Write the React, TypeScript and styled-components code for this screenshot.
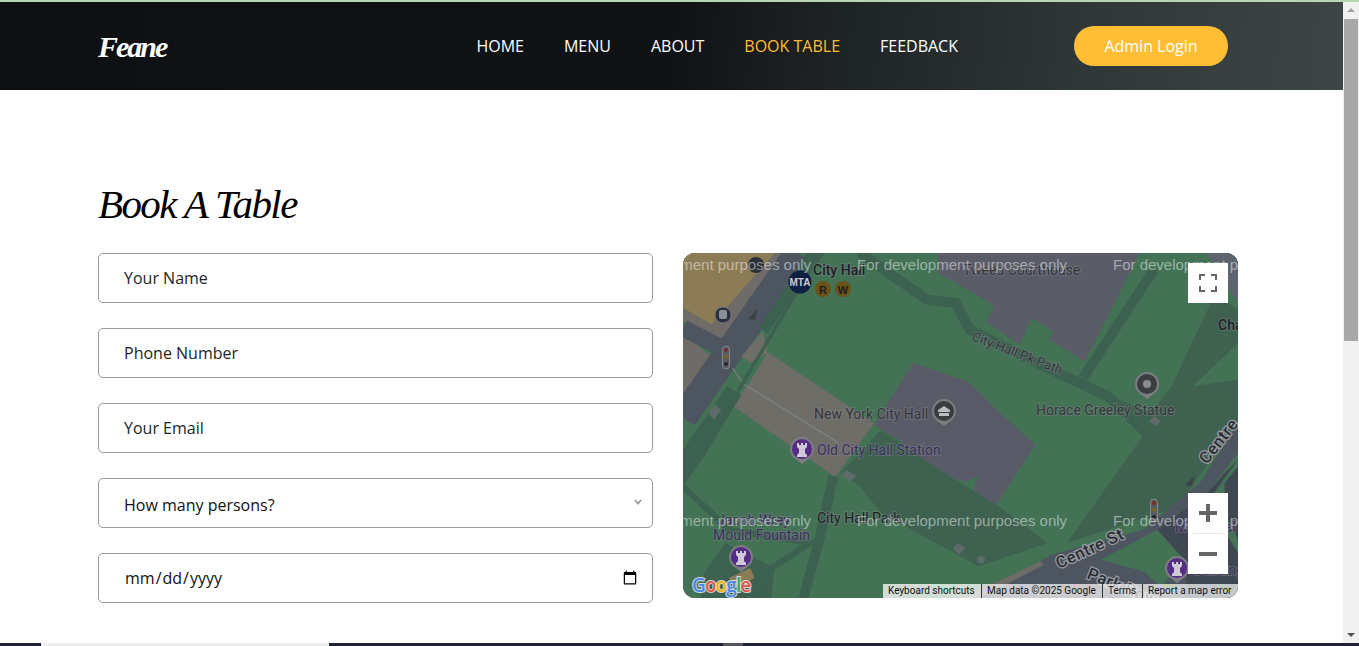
import React from 'react'
import styled, { createGlobalStyle } from 'styled-components'

const GlobalStyle = createGlobalStyle`
  html, body {
    margin: 0;
    height: 100%;
    overflow: hidden;
    background: #fff;
    font-family: "Open Sans", "Liberation Sans", sans-serif;
  }
  * { box-sizing: border-box; }
`

const Screen = styled.div`
  height: 646px;
  display: flex;
  flex-direction: column;
`

const TopStrip = styled.div`
  height: 2px;
  flex: none;
  background: #b9d6b4;
`

const Window = styled.div`
  flex: 1;
  min-height: 0;
  display: flex;
`

const Page = styled.div`
  flex: 1;
  min-width: 0;
  overflow: hidden;
`

const Header = styled.header`
  height: 88px;
  padding: 0 115px 0 98px;
  display: flex;
  align-items: center;
  background: linear-gradient(97deg, #0e1012 0%, #101315 50%, #1e2324 62%, #2f3637 80%, #3d4647 100%);
`

const Logo = styled.a`
  font-family: "Liberation Serif", serif;
  font-style: italic;
  font-weight: 700;
  font-size: 30px;
  letter-spacing: -2px;
  line-height: 40px;
  margin-top: 2px;
  color: #fff;
`

const Nav = styled.nav`
  margin-left: auto;
  margin-right: 116px;
  display: flex;
  gap: 40px;
`

const NavLink = styled.a<{ $active?: boolean }>`
  font-size: 16px;
  line-height: 24px;
  white-space: nowrap;
  color: ${({ $active }) => ($active ? '#ffbe33' : '#fff')};
`

const LoginButton = styled.button`
  width: 154px;
  height: 40px;
  padding: 0;
  border: none;
  border-radius: 20px;
  background: #ffbe33;
  color: #fff;
  font: 16px "Open Sans", sans-serif;
`

const Section = styled.section`
  padding: 90px 105px 0 98px;
`

const Title = styled.h2`
  margin: 0 0 25px;
  font-family: "Liberation Serif", serif;
  font-style: italic;
  font-weight: 400;
  font-size: 41px;
  letter-spacing: -1.6px;
  line-height: 48px;
  color: #000;
`

const Columns = styled.div`
  display: grid;
  grid-template-columns: 555px 555px;
  gap: 30px;
`

const Form = styled.form`
  display: flex;
  flex-direction: column;
  gap: 25px;
`

const Input = styled.input`
  width: 100%;
  height: 50px;
  padding: 0 25px 0 25px;
  border: 1px solid #999;
  border-radius: 5px;
  background: #fff;
  color: #111;
  font: 16px "Open Sans", sans-serif;
  outline: none;

  &::placeholder {
    color: #212529;
    opacity: 1;
  }
`

const DateInput = styled(Input)`
  padding-right: 12px;
`

const SelectWrap = styled.div`
  position: relative;
`

const Select = styled.select`
  width: 100%;
  height: 50px;
  padding: 4px 25px 0;
  border: 1px solid #999;
  border-radius: 5px;
  background: #fff;
  color: #111;
  font: 16px "Open Sans", sans-serif;
  appearance: none;
  outline: none;
`

const Chevron = styled.svg`
  position: absolute;
  top: 21px;
  right: 11px;
  width: 8px;
  height: 6px;
  pointer-events: none;
`

const MapFrame = styled.div`
  position: relative;
  height: 345px;
  border-radius: 12px;
  overflow: hidden;
  background: #437254;
`

const MapCanvas = styled.svg`
  display: block;
  width: 555px;
  height: 345px;
`

const MapLabel = styled.text<{ $tone?: 'dark' | 'grey' | 'purple'; $size?: number; $bold?: boolean }>`
  font-family: Roboto, "Liberation Sans", sans-serif;
  font-size: ${({ $size }) => $size ?? 14}px;
  font-weight: ${({ $bold }) => ($bold ? 500 : 400)};
  fill: ${({ $tone }) => ($tone === 'purple' ? '#3c2f5f' : $tone === 'grey' ? '#34363c' : '#1e2026')};
  stroke: rgba(130, 135, 140, 0.45);
  stroke-width: 2px;
  paint-order: stroke;
`

const RoadLabel = styled.text`
  font-family: Roboto, "Liberation Sans", sans-serif;
  font-size: 16.5px;
  font-weight: 500;
  letter-spacing: 0.5px;
  fill: #2a2c33;
  stroke: #9a9da2;
  stroke-width: 2.5px;
  paint-order: stroke;
`

const Watermark = styled.text`
  font-family: "Liberation Sans", sans-serif;
  font-size: 15px;
  fill: rgba(255, 255, 255, 0.48);
`

const GoogleMark = styled.text`
  font-family: "Open Sans", sans-serif;
  font-size: 19px;
  font-weight: 600;
  letter-spacing: -0.9px;
  stroke: #fff;
  stroke-width: 2px;
  stroke-opacity: 0.75;
  paint-order: stroke;
`

const MapControl = styled.div<{ $top: number }>`
  position: absolute;
  top: ${({ $top }) => $top}px;
  right: 10px;
  width: 40px;
  background: #fff;
`

const ControlCell = styled.div`
  height: 40px;
  display: flex;
  align-items: center;
  justify-content: center;
`

const ControlDivider = styled.div`
  height: 1px;
  margin: 0 5px;
  background: #e6e6e6;
`

const Attribution = styled.div`
  position: absolute;
  right: 0;
  bottom: 0;
  height: 14px;
  display: flex;
  background: rgba(255, 255, 255, 0.7);
  color: #111;
  font: 10px/14px Roboto, "Liberation Sans", sans-serif;
`

const AttributionItem = styled.span<{ $width: number }>`
  width: ${({ $width }) => $width}px;
  padding-left: 5px;
  white-space: nowrap;
  border-left: 1px solid #333;

  &:first-child {
    border-left: none;
    background: rgba(255, 255, 255, 0.2);
  }
`

const Scrollbar = styled.div`
  width: 16px;
  flex: none;
  position: relative;
  background: #f1f1f1;
`

const ScrollThumb = styled.div`
  position: absolute;
  top: 17px;
  left: 1px;
  width: 14px;
  height: 322px;
  background: #a8a8a8;
`

const ScrollArrow = styled.div<{ $down?: boolean }>`
  position: absolute;
  left: 4px;
  ${({ $down }) => ($down ? 'bottom: 6px;' : 'top: 6px;')}
  border-left: 4px solid transparent;
  border-right: 4px solid transparent;
  ${({ $down }) => ($down ? 'border-top: 4px solid #505050;' : 'border-bottom: 4px solid #a3a3a3;')}
`

const BottomStrip = styled.div`
  height: 3px;
  flex: none;
  display: flex;
  background: #1e2336;
`

const StripPiece = styled.div<{ $width: number; $color?: string }>`
  width: ${({ $width }) => $width}px;
  background: ${({ $color }) => $color ?? 'transparent'};
`

const Pin = ({ x, y, fill, children }: { x: number; y: number; fill: string; children?: React.ReactNode }) => (
  <g transform={`translate(${x} ${y})`}>
    <path d="M0 15 L-9 8 A12 12 0 1 1 9 8 Z" fill="#7b7d80" />
    <circle r="10" fill={fill} />
    {children}
  </g>
)

const Rook = () => (
  <path
    d="M-5 -6 h2 v2 h2 v-2 h2 v2 h2 v-2 h2 v4 l-2 2 v4 l2 2 v2 h-10 v-2 l2 -2 v-4 l-2 -2 Z"
    fill="#cfc8d8"
  />
)

const TrafficLight = ({ x, y }: { x: number; y: number }) => (
  <g transform={`translate(${x} ${y})`}>
    <rect x="-3.5" y="-11" width="7" height="23" rx="3.5" fill="#5a5c60" stroke="#85888c" />
    <circle cy="-7" r="2" fill="#7a2a28" />
    <circle cy="0" r="2" fill="#7a6420" />
    <circle cy="7" r="2" fill="#23262a" />
  </g>
)

// shapes are traced from the 2.825x / 3x crop, hence the scale on the group
const MapDrawing = () => (
  <MapCanvas viewBox="0 0 555 345">
    <g transform="scale(0.354 0.3333)">
      <rect width="1568" height="1035" fill="#437254" />
      <polygon points="0,0 260,0 80,215 0,165" fill="#8c7c55" />
      <polygon points="0,165 80,215 260,0 300,0 105,270 0,205" fill="#6f6b68" />
      <polygon points="0,270 18,275 0,335" fill="#8c7c55" />
      <polygon points="0,240 78,310 0,440" fill="#6f6b68" />
      <polyline points="325,0 0,495" fill="none" stroke="#4d5560" strokeWidth="80" />
      <polyline points="0,225 110,285" fill="none" stroke="#4d5560" strokeWidth="50" />
      <polygon points="350,0 400,0 240,240 215,225" fill="#3d6150" />
      <polygon points="225,235 165,310 190,330 240,300" fill="#6f6d68" />
      <polygon points="240,298 540,510 430,672 145,462 165,420 190,385" fill="#6f6d68" />
      <polyline points="140,345 170,392 440,570" fill="none" stroke="#83868a" strokeWidth="3" />
      <polyline points="320,120 155,415" fill="none" stroke="#3d6150" strokeWidth="10" />
      <polygon points="125,400 165,425 60,610 0,700 0,590" fill="#3d6150" />
      <polygon points="445,660 560,530 770,680 885,755 1030,870 835,940 560,780 500,700" fill="#3e6150" />
      <polyline points="425,670 385,860 340,1035" fill="none" stroke="#3d6150" strokeWidth="28" />
      <polyline points="0,700 130,830 360,870 250,945 240,1035" fill="none" stroke="#3d6150" strokeWidth="18" />
      <polygon points="60,960 120,870 250,940 230,1035 50,1035" fill="#3d6150" />
      <polyline points="500,0 690,140 770,150 810,230 1060,360 1200,430 1310,540" fill="none" stroke="#3d6150" strokeWidth="30" />
      <polyline points="1330,50 1130,375" fill="none" stroke="#3d6150" strokeWidth="28" />
      <polygon points="1225,435 1360,430 1380,400 1500,130 1568,150 1568,500 1400,760 1085,870 1305,540" fill="#3e6150" />
      <polygon points="1440,400 1568,270 1568,380" fill="#437254" />
      <polygon points="1225,435 1360,430 1320,480" fill="#437254" />
      <polygon points="720,0 1290,0 1135,325 1035,260 1045,235 985,195 950,275 855,205 880,160 830,125 720,60" fill="#5a5c68" />
      <polygon points="1290,0 1568,0 1568,170 1450,90" fill="#437254" />
      <polygon points="1480,0 1568,0 1568,150" fill="#5c6470" />
      <polygon points="650,330 800,385 830,410 880,465 995,575 885,755 820,710 835,670 800,685 770,680 640,590 610,560 540,515" fill="#5a5b68" />
      <polygon points="90,455 108,470 88,500 72,480" fill="#5f6a6a" />
      <polygon points="460,650 490,668 472,685 445,668" fill="#5f6a6a" />
      <polygon points="775,870 797,885 780,905 762,888" fill="#5f6a6a" />
      <polygon points="1330,490 1350,505 1335,520 1318,505" fill="#5f6a6a" />
      <circle cx="842" cy="920" r="11" fill="#5f6a6a" />
      <polygon points="790,1035 1010,925 1040,905 1300,830 1460,690 1568,510 1568,600 1480,720 1340,830 1470,1035" fill="#4d5560" />
      <polygon points="790,1035 1010,925 1020,935 840,1035" fill="#6f6b68" />
      <polygon points="1180,920 1340,830 1420,925 1350,1000 1300,955" fill="#437254" />
      <polygon points="1340,830 1480,720 1530,660 1568,620 1568,1035 1420,1035 1425,930" fill="#3f4753" />
      <polygon points="1500,720 1568,620 1568,640 1530,690 1530,780 1568,860 1568,900 1510,800" fill="#437254" />
      <polygon points="130,975 190,945 202,975 150,1005" fill="#8c7c55" />
    </g>

    <circle cx="73" cy="12" r="8" fill="#2a3038" />
    <circle cx="117" cy="29" r="11.5" fill="#0e2044" />
    <text x="117" y="33" textAnchor="middle" fill="#c8ccd4" fontFamily="Liberation Sans" fontSize="10" fontWeight="700">MTA</text>
    <circle cx="140" cy="36" r="8" fill="#6b5218" />
    <text x="140" y="40.5" textAnchor="middle" fill="#1e1e1e" fontFamily="Liberation Sans" fontSize="11" fontWeight="700">R</text>
    <circle cx="160" cy="36" r="8" fill="#6b5218" />
    <text x="160" y="40.5" textAnchor="middle" fill="#1e1e1e" fontFamily="Liberation Sans" fontSize="11" fontWeight="700">W</text>
    <MapLabel x="130" y="22" $bold>City Hall</MapLabel>
    <MapLabel x="280" y="22" $tone="grey">Tweed Courthouse</MapLabel>
    <MapLabel x="535" y="77" $bold>Cha</MapLabel>

    <Watermark x="-82" y="17">For development purposes only</Watermark>
    <Watermark x="174" y="17">For development purposes only</Watermark>
    <Watermark x="430" y="17">For development purposes only</Watermark>

    <circle cx="40" cy="62" r="8" fill="#2a3240" stroke="#6b7076" />
    <rect x="36" y="57" width="8" height="9" rx="2" fill="#8a8f98" />
    <polygon points="75,55 65,66 72,67" fill="#3c4248" />
    <polygon points="512,222 502,232 509,233" fill="#3c4248" />
    <TrafficLight x={43} y={104} />
    <TrafficLight x={471} y={257} />

    <MapLabel transform="translate(288 87) rotate(21)" $tone="grey" $size={13}>City Hall Pk Path</MapLabel>
    <MapLabel x="131" y="166" $tone="grey">New York City Hall</MapLabel>
    <Pin x={261} y={158} fill="#3a3c3f">
      <path d="M-6 -1 L0 -5 L6 -1 V1 H-6 Z M-5 2 H5 V5 H-5 Z" fill="#b9bcbc" />
    </Pin>
    <MapLabel x="353" y="162" $tone="grey">Horace Greeley Statue</MapLabel>
    <Pin x={464} y={131} fill="#3a3c3f">
      <circle r="4" fill="#8a8c8e" />
    </Pin>
    <MapLabel x="134" y="202" $tone="purple">Old City Hall Station</MapLabel>
    <Pin x={119} y={196} fill="#552d85">
      <Rook />
    </Pin>
    <MapLabel x="134" y="270">City Hall Park</MapLabel>
    <MapLabel x="34" y="272" $tone="purple">Jacob Wrey</MapLabel>
    <MapLabel x="30" y="287" $tone="purple">Mould Fountain</MapLabel>
    <Pin x={58} y={304} fill="#552d85">
      <Rook />
    </Pin>
    <Pin x={494} y={315} fill="#552d85">
      <Rook />
    </Pin>
    <MapLabel x="492" y="279" $tone="purple">Municipal</MapLabel>
    <MapLabel x="511" y="322" $tone="purple">Building</MapLabel>
    <RoadLabel transform="translate(376 316) rotate(-25)">Centre St</RoadLabel>
    <RoadLabel transform="translate(403 325) rotate(22)">Park Row</RoadLabel>
    <RoadLabel transform="translate(524 212) rotate(-52)">Centre</RoadLabel>

    <Watermark x="-82" y="273">For development purposes only</Watermark>
    <Watermark x="174" y="273">For development purposes only</Watermark>
    <Watermark x="430" y="273">For development purposes only</Watermark>

    <GoogleMark x="9" y="339">
      <tspan fill="#4a86e8">G</tspan>
      <tspan fill="#e4564a">o</tspan>
      <tspan fill="#f4b400">o</tspan>
      <tspan fill="#4a86e8">g</tspan>
      <tspan fill="#34a853">l</tspan>
      <tspan fill="#e4564a">e</tspan>
    </GoogleMark>
  </MapCanvas>
)

const App = () => {
  return (
    <Screen>
      <GlobalStyle />
      <TopStrip />
      <Window>
        <Page>
          <Header>
            <Logo>Feane</Logo>
            <Nav>
              <NavLink>HOME</NavLink>
              <NavLink>MENU</NavLink>
              <NavLink>ABOUT</NavLink>
              <NavLink $active>BOOK TABLE</NavLink>
              <NavLink>FEEDBACK</NavLink>
            </Nav>
            <LoginButton>Admin Login</LoginButton>
          </Header>
          <Section>
            <Title>Book A Table</Title>
            <Columns>
              <Form>
                <Input type="text" placeholder="Your Name" />
                <Input type="text" placeholder="Phone Number" />
                <Input type="email" placeholder="Your Email" />
                <SelectWrap>
                  <Select defaultValue="">
                    <option value="">How many persons?</option>
                    <option value="2">2</option>
                    <option value="3">3</option>
                  </Select>
                  <Chevron viewBox="0 0 8 6">
                    <path d="M1 1 L4 4.5 L7 1" fill="none" stroke="#999" strokeWidth="1.8" />
                  </Chevron>
                </SelectWrap>
                <DateInput type="date" />
              </Form>
              <MapFrame>
                <MapDrawing />
                <MapControl $top={10}>
                  <ControlCell>
                    <svg width="18" height="18" viewBox="0 0 18 18">
                      <path d="M1 6 V1 H6 M12 1 H17 V6 M17 12 V17 H12 M6 17 H1 V12" fill="none" stroke="#666" strokeWidth="2" />
                    </svg>
                  </ControlCell>
                </MapControl>
                <MapControl $top={240}>
                  <ControlCell>
                    <svg width="18" height="18" viewBox="0 0 18 18">
                      <path d="M0 9 H18 M9 0 V18" fill="none" stroke="#666" strokeWidth="4" />
                    </svg>
                  </ControlCell>
                  <ControlDivider />
                  <ControlCell>
                    <svg width="18" height="18" viewBox="0 0 18 18">
                      <path d="M0 9 H18" fill="none" stroke="#666" strokeWidth="4" />
                    </svg>
                  </ControlCell>
                </MapControl>
                <Attribution>
                  <AttributionItem $width={98}>Keyboard shortcuts</AttributionItem>
                  <AttributionItem $width={121}>Map data ©2025 Google</AttributionItem>
                  <AttributionItem $width={40}>Terms</AttributionItem>
                  <AttributionItem $width={96}>Report a map error</AttributionItem>
                </Attribution>
              </MapFrame>
            </Columns>
          </Section>
        </Page>
        <Scrollbar>
          <ScrollArrow />
          <ScrollThumb />
          <ScrollArrow $down />
        </Scrollbar>
      </Window>
      <BottomStrip>
        <StripPiece $width={41} />
        <StripPiece $width={288} $color="#efefef" />
        <StripPiece $width={394} />
        <StripPiece $width={20} $color="#55565f" />
      </BottomStrip>
    </Screen>
  )
}

export default App
